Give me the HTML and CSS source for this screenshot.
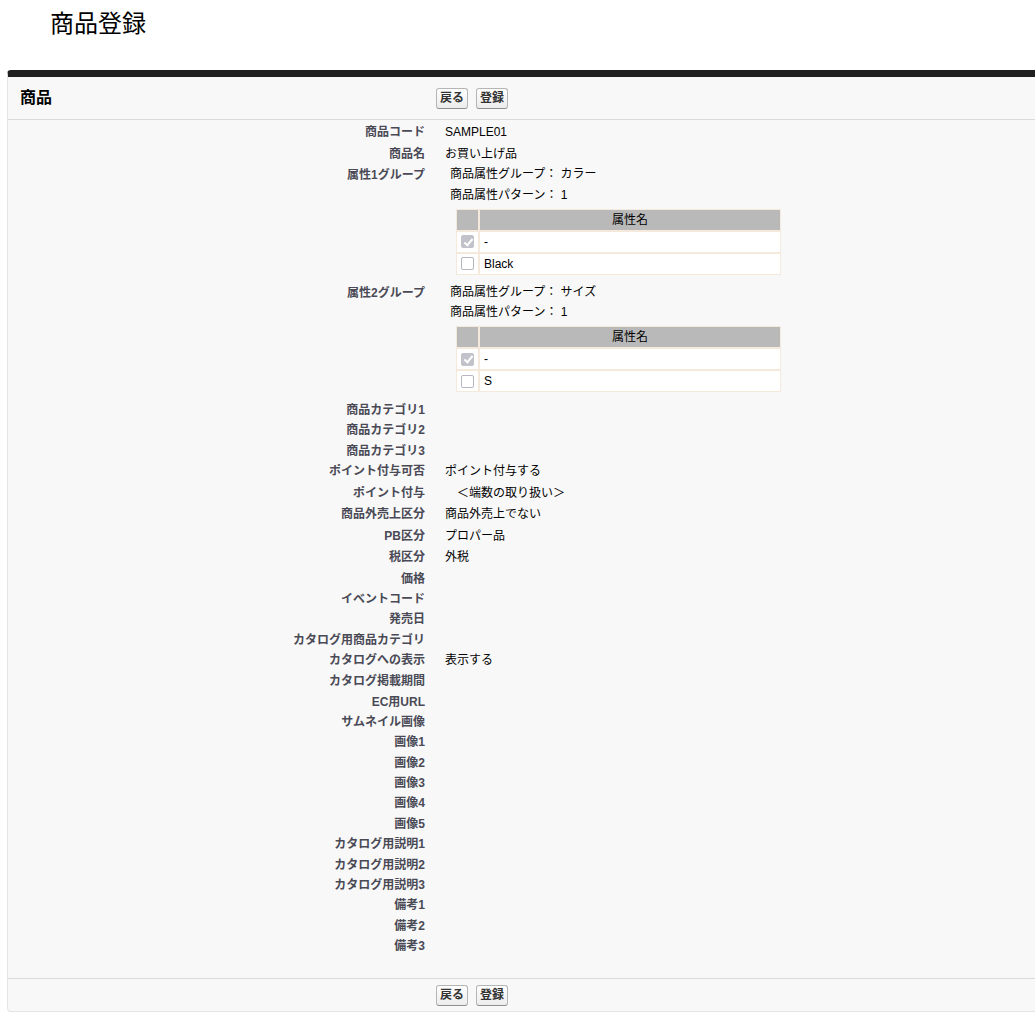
FILE: index.html
```html
<!DOCTYPE html>
<html lang="ja">
<head>
<meta charset="utf-8">
<title>商品登録</title>
<link rel="stylesheet" href="styles.css">
</head>
<body>
<h1 class="page-title">商品登録</h1>
<div class="panel">
  <div class="bar panel-head">
    <h2 class="panel-title">商品</h2>
    <div class="btns"><button class="btn" type="button">戻る</button><button class="btn" type="button">登録</button></div>
  </div>
  <div class="panel-body">
    <div class="detail">
      <div class="lbl">商品コード</div><div class="val">SAMPLE01</div>
      <div class="lbl">商品名</div><div class="val">お買い上げ品</div>
      <div class="lbl">属性1グループ</div>
      <div class="val group">
        <div class="gline">商品属性グループ： カラー</div>
        <div class="gline">商品属性パターン： 1</div>
        <table class="attr">
          <colgroup><col class="c-chk"><col></colgroup>
          <thead><tr><th></th><th>属性名</th></tr></thead>
          <tbody>
            <tr><td class="chk"><input class="cb" type="checkbox" checked disabled></td><td class="txt">-</td></tr>
            <tr><td class="chk"><input class="cb" type="checkbox"></td><td class="txt">Black</td></tr>
          </tbody>
        </table>
      </div>
      <div class="lbl">属性2グループ</div>
      <div class="val group">
        <div class="gline">商品属性グループ： サイズ</div>
        <div class="gline">商品属性パターン： 1</div>
        <table class="attr">
          <colgroup><col class="c-chk"><col></colgroup>
          <thead><tr><th></th><th>属性名</th></tr></thead>
          <tbody>
            <tr><td class="chk"><input class="cb" type="checkbox" checked disabled></td><td class="txt">-</td></tr>
            <tr><td class="chk"><input class="cb" type="checkbox"></td><td class="txt">S</td></tr>
          </tbody>
        </table>
      </div>
      <div class="lbl">商品カテゴリ1</div><div class="val"></div>
      <div class="lbl">商品カテゴリ2</div><div class="val"></div>
      <div class="lbl">商品カテゴリ3</div><div class="val"></div>
      <div class="lbl">ポイント付与可否</div><div class="val">ポイント付与する</div>
      <div class="lbl">ポイント付与</div><div class="val">　＜端数の取り扱い＞</div>
      <div class="lbl">商品外売上区分</div><div class="val">商品外売上でない</div>
      <div class="lbl">PB区分</div><div class="val">プロパー品</div>
      <div class="lbl">税区分</div><div class="val">外税</div>
      <div class="lbl">価格</div><div class="val"></div>
      <div class="lbl">イベントコード</div><div class="val"></div>
      <div class="lbl">発売日</div><div class="val"></div>
      <div class="lbl">カタログ用商品カテゴリ</div><div class="val"></div>
      <div class="lbl">カタログへの表示</div><div class="val">表示する</div>
      <div class="lbl">カタログ掲載期間</div><div class="val"></div>
      <div class="lbl">EC用URL</div><div class="val"></div>
      <div class="lbl">サムネイル画像</div><div class="val"></div>
      <div class="lbl">画像1</div><div class="val"></div>
      <div class="lbl">画像2</div><div class="val"></div>
      <div class="lbl">画像3</div><div class="val"></div>
      <div class="lbl">画像4</div><div class="val"></div>
      <div class="lbl">画像5</div><div class="val"></div>
      <div class="lbl">カタログ用説明1</div><div class="val"></div>
      <div class="lbl">カタログ用説明2</div><div class="val"></div>
      <div class="lbl">カタログ用説明3</div><div class="val"></div>
      <div class="lbl">備考1</div><div class="val"></div>
      <div class="lbl">備考2</div><div class="val"></div>
      <div class="lbl">備考3</div><div class="val"></div>
    </div>
  </div>
  <div class="bar panel-foot">
    <div class="spacer"></div>
    <div class="btns"><button class="btn" type="button">戻る</button><button class="btn" type="button">登録</button></div>
  </div>
</div>
</body>
</html>
```
FILE: styles.css
```css
* { box-sizing: border-box; }

html, body {
  margin: 0;
  padding: 0;
  background: #fff;
}

body {
  font-family: "Liberation Sans", "Noto Sans CJK JP", sans-serif;
  font-size: 12px;
  color: #000;
}

.page-title {
  margin: 0;
  padding: 12px 0 0 50px;
  font-size: 24px;
  line-height: 24px;
  font-weight: normal;
  color: #000;
}

.panel {
  margin: 34px 0 0 7px;
  background: #f8f8f8;
  border-top: 7px solid #1f1f1f;
  border-left: 1px solid #e4e4e4;
  border-bottom: 1px solid #e4e4e4;
  border-radius: 4px 0 0 4px;
}

.bar {
  display: grid;
  grid-template-columns: 428px 1fr;
  align-items: center;
}

.panel-head {
  height: 43px;
  border-bottom: 1px solid #dbdbdb;
}

.panel-title {
  margin: 0;
  padding-left: 12px;
  font-size: 16px;
  line-height: 20px;
  font-weight: bold;
  color: #000;
}

.panel-foot {
  border-top: 1px solid #dbdbdb;
  padding: 6px 0 5px;
}

.btns {
  display: flex;
  gap: 8px;
}

.btn {
  font-family: "Liberation Sans", "Noto Sans CJK JP", sans-serif;
  font-size: 12px;
  font-weight: bold;
  color: #333;
  height: 21px;
  line-height: 17px;
  padding: 0 3px;
  margin: 0;
  border: 1px solid #b5b5b5;
  border-bottom-color: #8f8f8f;
  border-radius: 3px;
  background: linear-gradient(#ffffff, #ececec);
}

.panel-body {
  padding-bottom: 23.65px;
}

.detail {
  display: grid;
  grid-template-columns: 419px 1fr;
  align-items: start;
}

.lbl {
  padding: 5px 2px 1px 0;
  text-align: right;
  font-weight: bold;
  color: #4a4a56;
  line-height: 14.35px;
  white-space: nowrap;
}

.val {
  padding: 5px 2px 1px 18px;
  line-height: 15.5px;
  color: #000;
}

.val.group {
  padding: 1px 0 6px 23px;
}

.gline {
  line-height: 20.5px;
}

.attr {
  margin: 3.5px 0 0 6px;
  width: 325px;
  table-layout: fixed;
  border-collapse: separate;
  border-spacing: 0;
}

.c-chk { width: 23px; }

.attr th,
.attr td {
  border: 1px solid #f5e9dc;
  padding: 0;
  line-height: 20px;
  font-size: 12px;
}

.attr th {
  background: #b9b9b9;
  font-weight: normal;
  text-align: center;
  color: #000;
}

.attr td {
  background: #fff;
}

.attr td.txt {
  padding-left: 4px;
}

.attr td.chk {
  vertical-align: middle;
}

.cb {
  appearance: none;
  -webkit-appearance: none;
  display: block;
  position: relative;
  margin: 0 0 0 4px;
  width: 13px;
  height: 13px;
  border: 1px solid #b7b7c1;
  border-radius: 2px;
  background: #fff;
}

.cb:checked {
  background: #c2c2ca;
  border-color: #c2c2ca;
}

.cb:checked::after {
  content: "";
  position: absolute;
  left: 3.5px;
  top: 0.5px;
  width: 3px;
  height: 7px;
  border: solid #fff;
  border-width: 0 2px 2px 0;
  transform: rotate(40deg);
}
```
